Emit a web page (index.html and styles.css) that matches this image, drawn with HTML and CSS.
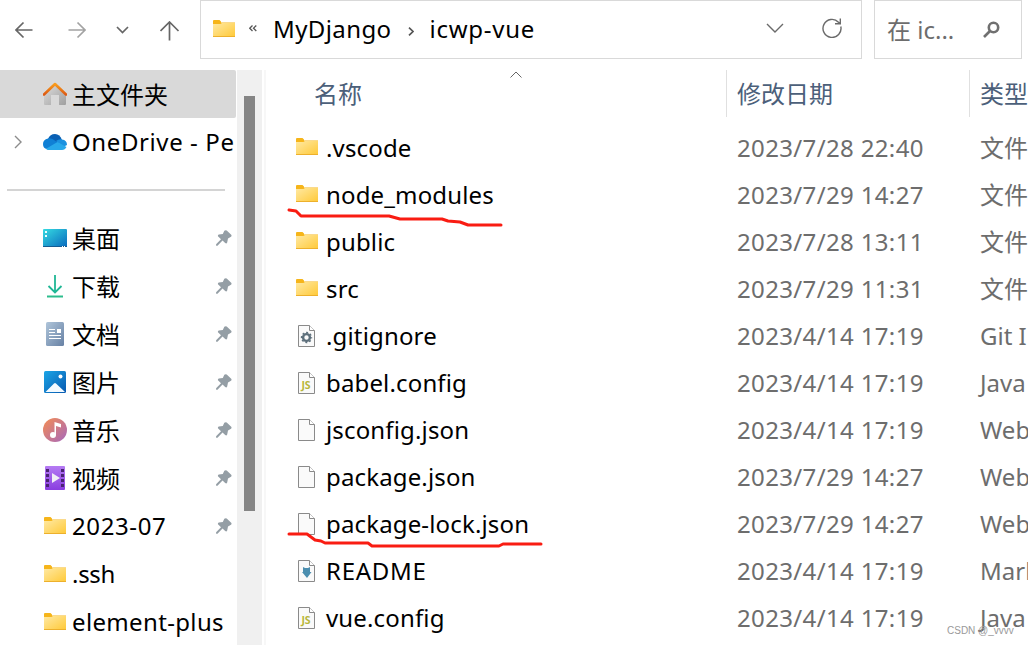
FILE: index.html
```html
<!DOCTYPE html>
<html lang="zh-CN">
<head>
  <meta charset="UTF-8">
  <title>icwp-vue</title>
  <link rel="stylesheet" href="styles.css">
</head>
<body>

  <!-- Shared icons -->
  <svg class="defs" width="0" height="0">
    <defs>
      <linearGradient id="g-folder" x1="0" y1="0" x2="1" y2="1">
        <stop offset="0" stop-color="#ffe9a3"/><stop offset="1" stop-color="#ffc937"/>
      </linearGradient>
      <linearGradient id="g-roof" x1="0" y1="0" x2="0" y2="1">
        <stop offset="0" stop-color="#f99d1c"/><stop offset="1" stop-color="#dd5a13"/>
      </linearGradient>
      <linearGradient id="g-wall" x1="0" y1="0" x2="1" y2="1">
        <stop offset="0" stop-color="#dedede"/><stop offset="1" stop-color="#9f9f9f"/>
      </linearGradient>
      <linearGradient id="g-desktop" x1="0" y1="0" x2="1" y2="1">
        <stop offset="0" stop-color="#35dbe2"/><stop offset="1" stop-color="#0969bd"/>
      </linearGradient>
      <linearGradient id="g-doc" x1="0" y1="0" x2="1" y2="1">
        <stop offset="0" stop-color="#afc5da"/><stop offset="1" stop-color="#6781a4"/>
      </linearGradient>
      <linearGradient id="g-pic" x1="0" y1="0" x2="1" y2="1">
        <stop offset="0" stop-color="#1ba5e6"/><stop offset="1" stop-color="#0859b0"/>
      </linearGradient>
      <linearGradient id="g-music" x1="0" y1="0" x2="1" y2="1">
        <stop offset="0" stop-color="#f58d52"/><stop offset="1" stop-color="#a668bd"/>
      </linearGradient>
      <linearGradient id="g-video" x1="0" y1="0" x2="0" y2="1">
        <stop offset="0" stop-color="#b57bf3"/><stop offset="1" stop-color="#8a3de0"/>
      </linearGradient>
      <symbol id="folder" viewBox="0 0 22 18">
        <path d="M0 1Q0 0 1 0H6.500L8 1.500V2.500H22V6H0Z" fill="#f6b51a"/>
        <path d="M0 4H7.500L9 3H22V17H0Z" fill="url(#g-folder)"/>
        <path d="M0 16.500H22" stroke="#edb02c"/>
      </symbol>
      <symbol id="file" viewBox="0 0 17 22">
        <path d="M.5.500H11.500L16.500 5.500V21.500H.5Z" fill="#fafafa" stroke="#8a8a8a"/>
        <path d="M11.500.500V5.500H16.500" fill="#fff" stroke="#8a8a8a"/>
      </symbol>
      <symbol id="pin" viewBox="0 0 16 16">
        <path d="M8.300.800Q9.500-.3 10.700.500L15.200 4.800Q16 6 15 6.800L12 8.600 11.200 12.500Q10.500 14 9.200 13L6.500 10.600 1.500 15.700H.1V14.300L5 9.200 2.200 6.600Q1.300 5.200 2.800 4.600L6.800 3.900Z" fill="#949ea5"/>
      </symbol>
    </defs>
  </svg>

  <!-- Navigation and address -->
  <div class="toolbar">
    <div class="nav">
      <svg width="18" height="18" viewBox="0 0 18 18"><path d="M17.500 9H1M8.500 1.500L1 9 8.500 16.500"/></svg>
      <svg class="off" width="18" height="18" viewBox="0 0 18 18"><path d="M.5 9H17M9.500 1.500L17 9 9.500 16.500"/></svg>
      <svg width="14" height="18" viewBox="0 0 14 18"><path d="M1 6L6.500 11.500 12 6"/></svg>
      <svg width="20" height="20" viewBox="0 0 20 20"><path d="M9.500 19.500V1M.5 10L9.500 1 18.500 10"/></svg>
    </div>
    <div class="address">
      <svg class="dir" width="22" height="18"><use href="#folder"/></svg>
      <svg class="chev more" width="8" height="7" viewBox="0 0 8 7"><path d="M3.500.500L.7 3.200 3.500 6M7.300.500L4.500 3.200 7.300 6"/></svg>
      <span class="crumb first">MyDjango</span>
      <svg class="chev next" width="6" height="9" viewBox="0 0 6 9"><path d="M1 .7L5 4.500 1 8.300"/></svg>
      <span class="crumb last">icwp-vue</span>
      <svg class="drop" width="18" height="10" viewBox="0 0 18 10"><path d="M1 1L9 9 17 1"/></svg>
      <svg class="refresh" width="20" height="20" viewBox="0 0 20 20"><path d="M18.800 8.500A9 9 0 1 1 16.500 4.200L18.200 5.500M18.300.500V5.700H13"/></svg>
    </div>
    <div class="search">
      <span>在 ic...</span>
      <svg width="17" height="17" viewBox="0 0 17 17"><circle cx="10.500" cy="6.500" r="4.700"/><path d="M7 10L1 16"/></svg>
    </div>
  </div>

  <div class="main">
    <!-- Sidebar -->
    <div class="sidebar">
      <div class="item active">
        <svg width="24" height="24" viewBox="0 0 24 24"><path d="M1 12L12 2 23 12V22Q23 23 22 23H16V13H8V23H2Q1 23 1 22Z" fill="url(#g-wall)"/><path d="M1 12.500L12 2 23 12.500" fill="none" stroke="url(#g-roof)" stroke-width="2.600" stroke-linecap="round" stroke-linejoin="round"/></svg>
        <span>主文件夹</span>
      </div>
      <div class="item onedrive">
        <svg class="expand" width="8" height="14" viewBox="0 0 8 14"><path d="M1 1L7 7 1 13"/></svg>
        <svg width="24" height="16" viewBox="0 0 24 16"><path d="M5 5Q7 0 12 0T19 6L14 11 4 8Z" fill="#0a60b4"/><path d="M5 4.500Q9 3.800 12.500 7L15 9 4 15Q0 14.500 0 10T5 4.500Z" fill="#1080d5"/><path d="M13 7Q16 4.800 19 5.500 24 6 24 11L20 13Z" fill="#1b91df"/><path d="M3 14.700L14.500 8 23.500 13Q22 16 19 16H5Q4 16 3 14.700Z" fill="#28a8ea"/></svg>
        <span>OneDrive - Pe</span>
      </div>
      <div class="line"></div>
      <div class="item">
        <svg width="24" height="18" viewBox="0 0 24 18"><rect width="24" height="18" rx="1" fill="url(#g-desktop)"/><path d="M2 2h2v2H2zM2 6h2v2H2z" fill="#e9ffff"/><path d="M0 17H24V18H0Z" fill="#155b91"/><path d="M19 17h1v1h-1zM21 17h1v1h-1z" fill="#fff"/></svg>
        <span>桌面</span><svg class="pin" width="16" height="16"><use href="#pin"/></svg>
      </div>
      <div class="item">
        <svg width="24" height="24" viewBox="0 0 24 24"><path d="M12 1V18M5.500 12L12 18.500 18.500 12" fill="none" stroke="#20b795" stroke-width="1.800"/><path d="M4 22.500H20" stroke="#2dbd8d" stroke-width="2"/></svg>
        <span>下载</span><svg class="pin" width="16" height="16"><use href="#pin"/></svg>
      </div>
      <div class="item">
        <svg width="24" height="24" viewBox="0 0 24 24"><rect x="3" width="18" height="24" rx="1.500" fill="url(#g-doc)"/><path d="M6 7.500h6M6 10.500h6M6 13.500h12M6 16.500h12" stroke="#fff"/><path d="M14 7h4v4h-4z" fill="#fff"/></svg>
        <span>文档</span><svg class="pin" width="16" height="16"><use href="#pin"/></svg>
      </div>
      <div class="item">
        <svg width="24" height="22" viewBox="0 0 24 22"><rect x="1" width="22" height="22" rx="1.500" fill="url(#g-pic)"/><path d="M2.500 21L11 12.500Q12 11.500 13 12.500L22 21Z" fill="#f3faff"/><circle cx="17.500" cy="5.500" r="2" fill="#fff"/></svg>
        <span>图片</span><svg class="pin" width="16" height="16"><use href="#pin"/></svg>
      </div>
      <div class="item">
        <svg width="24" height="24" viewBox="0 0 24 24"><circle cx="12" cy="12" r="12" fill="url(#g-music)"/><circle cx="10" cy="17" r="3" fill="#fff"/><path d="M11.500 17V4L18 6V9.500L13 8V17Z" fill="#fff"/></svg>
        <span>音乐</span><svg class="pin" width="16" height="16"><use href="#pin"/></svg>
      </div>
      <div class="item">
        <svg width="24" height="24" viewBox="0 0 24 24"><rect x="2" width="20" height="24" rx="1" fill="url(#g-video)"/><path d="M3 3h3v3H3zM3 8h3v3H3zM3 13h3v3H3zM3 18h3v3H3zM18 3h3v3h-3zM18 8h3v3h-3zM18 13h3v3h-3zM18 18h3v3h-3z" fill="#4a2473"/><path d="M9 7L17 12 9 17Z" fill="#f1eef6"/></svg>
        <span>视频</span><svg class="pin" width="16" height="16"><use href="#pin"/></svg>
      </div>
      <div class="item latin">
        <svg class="dir" width="22" height="18"><use href="#folder"/></svg>
        <span class="num">2023-07</span><svg class="pin" width="16" height="16"><use href="#pin"/></svg>
      </div>
      <div class="item latin">
        <svg class="dir" width="22" height="18"><use href="#folder"/></svg>
        <span class="ssh">.ssh</span>
      </div>
      <div class="item latin">
        <svg class="dir" width="22" height="18"><use href="#folder"/></svg>
        <span>element-plus</span>
      </div>
    </div>

    <div class="scrollbar"><div class="thumb"></div></div>

    <!-- File list -->
    <div class="files">
      <div class="head">
        <span class="name">名称</span>
        <svg class="sort" width="12" height="7" viewBox="0 0 12 7"><path d="M.5 6.500L6 1 11.500 6.500"/></svg>
        <span class="date">修改日期</span>
        <span class="type">类型</span>
      </div>
      <div class="row"><svg class="dir" width="22" height="18"><use href="#folder"/></svg><span class="name">.vscode</span><span class="date">2023/7/28 22:40</span><span class="type">文件</span></div>
      <div class="row"><svg class="dir" width="22" height="18"><use href="#folder"/></svg><span class="name">node_modules</span><span class="date">2023/7/29 14:27</span><span class="type">文件</span>
        <svg class="mark" width="216" height="20" viewBox="0 0 216 20"><path d="M2 3L9 4 14 9H102L113 12H155L161 14 173 15 181 18H214"/></svg>
      </div>
      <div class="row"><svg class="dir" width="22" height="18"><use href="#folder"/></svg><span class="name">public</span><span class="date">2023/7/28 13:11</span><span class="type">文件</span></div>
      <div class="row"><svg class="dir" width="22" height="18"><use href="#folder"/></svg><span class="name">src</span><span class="date">2023/7/29 11:31</span><span class="type">文件</span></div>
      <div class="row"><svg class="doc" width="17" height="22" viewBox="0 0 17 22"><use href="#file"/><circle cx="8.500" cy="12.500" r="3.400" fill="none" stroke="#5d6f7b" stroke-width="2.400"/><circle cx="8.500" cy="12.500" r="5" fill="none" stroke="#5d6f7b" stroke-width="1.400" stroke-dasharray="2 1.927" stroke-dashoffset="1"/></svg><span class="name">.gitignore</span><span class="date">2023/4/14 17:19</span><span class="type">Git I</span></div>
      <div class="row"><svg class="doc" width="17" height="22" viewBox="0 0 17 22"><use href="#file"/><text x="3.500" y="16.500" class="js">JS</text></svg><span class="name">babel.config</span><span class="date">2023/4/14 17:19</span><span class="type">Java</span></div>
      <div class="row"><svg class="doc" width="17" height="22"><use href="#file"/></svg><span class="name">jsconfig.json</span><span class="date">2023/4/14 17:19</span><span class="type">Web</span></div>
      <div class="row"><svg class="doc" width="17" height="22"><use href="#file"/></svg><span class="name">package.json</span><span class="date">2023/7/29 14:27</span><span class="type">Web</span></div>
      <div class="row"><svg class="doc" width="17" height="22"><use href="#file"/></svg><span class="name">package-lock.json</span><span class="date">2023/7/29 14:27</span><span class="type">Web</span>
        <svg class="mark lock" width="256" height="18" viewBox="0 0 256 18"><path d="M2 3H20L28 9 34 10 38 12H81L85 15H212L216 13H254"/></svg>
      </div>
      <div class="row"><svg class="doc" width="17" height="22" viewBox="0 0 17 22"><use href="#file"/><path d="M5 7L7 8H10L12 7V12H13.500L9 18 4 12H5Z" fill="#4b8eaf"/></svg><span class="name caps">README</span><span class="date">2023/4/14 17:19</span><span class="type">Mark</span></div>
      <div class="row"><svg class="doc" width="17" height="22" viewBox="0 0 17 22"><use href="#file"/><text x="3.500" y="16.500" class="js">JS</text></svg><span class="name">vue.config</span><span class="date">2023/4/14 17:19</span><span class="type">Java</span></div>
    </div>
  </div>

  <div class="watermark">CSDN @_vvvv</div>

</body>
</html>
```
FILE: styles.css
```css
* {
  box-sizing: border-box;
}
body {
  margin: 0;
  width: 1028px;
  height: 645px;
  overflow: hidden;
  position: relative;
  background: #fff;
  color: #000;
  font-family: "Noto Sans", "Noto Sans CJK SC", sans-serif;
  font-size: 24px;
  line-height: 34px;
  white-space: nowrap;
}
svg {
  display: block;
  flex: none;
}
.defs {
  position: absolute;
}

/* Toolbar */
.toolbar {
  display: flex;
  height: 59px;
}
.nav {
  display: flex;
  align-items: center;
  width: 200px;
  padding-left: 15px;
}
.nav svg {
  fill: none;
  stroke: #666;
  stroke-width: 1.7;
  margin-right: 35px;
}
.nav svg:nth-child(2) {
  margin-right: 30px;
}
.nav svg:nth-child(3) {
  margin-right: 30px;
}
.nav svg:nth-child(4) {
  margin: 2px 0 0;
}
.nav .off {
  stroke: #a3a3a3;
}
.address {
  display: flex;
  align-items: center;
  width: 662px;
  border: 1px solid #d9d9d9;
  padding-left: 12px;
}
.address .dir {
  margin-bottom: 2px;
}
.chev {
  fill: none;
  stroke: #555;
  stroke-width: 1.3;
}
.more {
  margin: 0 16px 2px 14px;
}
.crumb {
  padding-bottom: 2px;
}
.first {
  letter-spacing: 0.4px;
}
.last {
  letter-spacing: 0.75px;
}
.next {
  stroke-width: 1.7;
  margin: 3px 16px 0 16px;
}
.drop {
  margin-left: auto;
  margin-right: 38px;
  margin-bottom: 3px;
}
.refresh {
  margin-right: 19px;
  margin-bottom: 3px;
}
.drop, .refresh {
  fill: none;
  stroke: #6a6a6a;
  stroke-width: 1.4;
}
.search {
  display: flex;
  align-items: center;
  justify-content: space-between;
  width: 148px;
  margin-left: 12px;
  padding: 0 21px 0 12px;
  border: 1px solid #d9d9d9;
  color: #6d6d6d;
}
.search svg {
  fill: none;
  stroke: #707070;
  stroke-width: 2.6;
}

/* Sidebar */
.main {
  display: flex;
  height: 575px;
  margin-top: 11px;
}
.sidebar {
  flex: none;
  width: 237px;
}
.item {
  display: flex;
  align-items: center;
  height: 48px;
  width: 236px;
  padding-left: 43px;
  overflow: hidden;
}
.item span {
  margin-left: 5px;
  padding-top: 1px;
}
.item .dir {
  margin: 0 1px;
}
.item.latin span {
  padding-top: 0;
  letter-spacing: 0.35px;
}
.item.latin .num {
  letter-spacing: 0.6px;
}
.item.latin .ssh {
  letter-spacing: -0.3px;
}
.active {
  background: #d9d9d9;
  border-radius: 0 2px 2px 0;
}
.onedrive {
  padding-left: 14px;
}
.onedrive span {
  padding-top: 0;
  letter-spacing: 0.6px;
}
.expand {
  fill: none;
  stroke: #8c8c8c;
  stroke-width: 1.4;
  margin-right: 21px;
}
.pin {
  margin-left: auto;
  margin-right: 4px;
}
.line {
  height: 2px;
  margin: 23px 12px 23px 7px;
  background: #d4d4d4;
}
.scrollbar {
  flex: none;
  width: 25px;
  padding: 26px 7px 0;
  background: #f0f0f0;
}
.thumb {
  width: 11px;
  height: 415px;
  background: #858585;
}

/* File list */
.files {
  flex: 1;
  min-width: 0;
  overflow: hidden;
  margin-left: 2px;
  border-left: 2px solid #f7f7f7;
}
.head {
  display: flex;
  height: 47px;
  align-items: center;
  color: #4c607a;
  margin-bottom: 8px;
}
.head span {
  flex: none;
}
.head .name {
  width: 196px;
  margin-left: 48px;
  padding-top: 1px;
}
.sort {
  align-self: flex-start;
  margin-top: 1px;
  fill: none;
  stroke: #666;
}
.head .date, .head .type {
  line-height: 48px;
  height: 47px;
  border-left: 1px solid #e0e0e0;
  padding-left: 10px;
}
.head .date {
  width: 243px;
  margin-left: 204px;
}
.row {
  display: flex;
  align-items: center;
  height: 47px;
  padding-left: 30px;
  position: relative;
}
.row span {
  flex: none;
  padding-bottom: 2px;
}
.row .dir {
  margin: 0 8px 4px 0;
}
.row .doc {
  margin: 0 11px 2px 2px;
}
.row .name {
  width: 411px;
  letter-spacing: 0.15px;
}
.row .caps {
  letter-spacing: 0.7px;
}
.row .date {
  width: 243px;
  color: #6d6d6d;
  letter-spacing: 0.35px;
}
.row .type {
  color: #6d6d6d;
}
.js {
  font: bold 10.5px "Open Sans", sans-serif;
  letter-spacing: -0.3px;
  fill: #b7b73b;
}
.mark {
  position: absolute;
  left: 21px;
  top: 35px;
  fill: none;
  stroke: #f91c12;
  stroke-width: 3;
  stroke-linecap: round;
  stroke-linejoin: round;
}
.lock {
  top: 30px;
}
.watermark {
  position: absolute;
  left: 947px;
  top: 624px;
  font: 10px/13px "Liberation Sans", sans-serif;
  color: #999;
}
```
